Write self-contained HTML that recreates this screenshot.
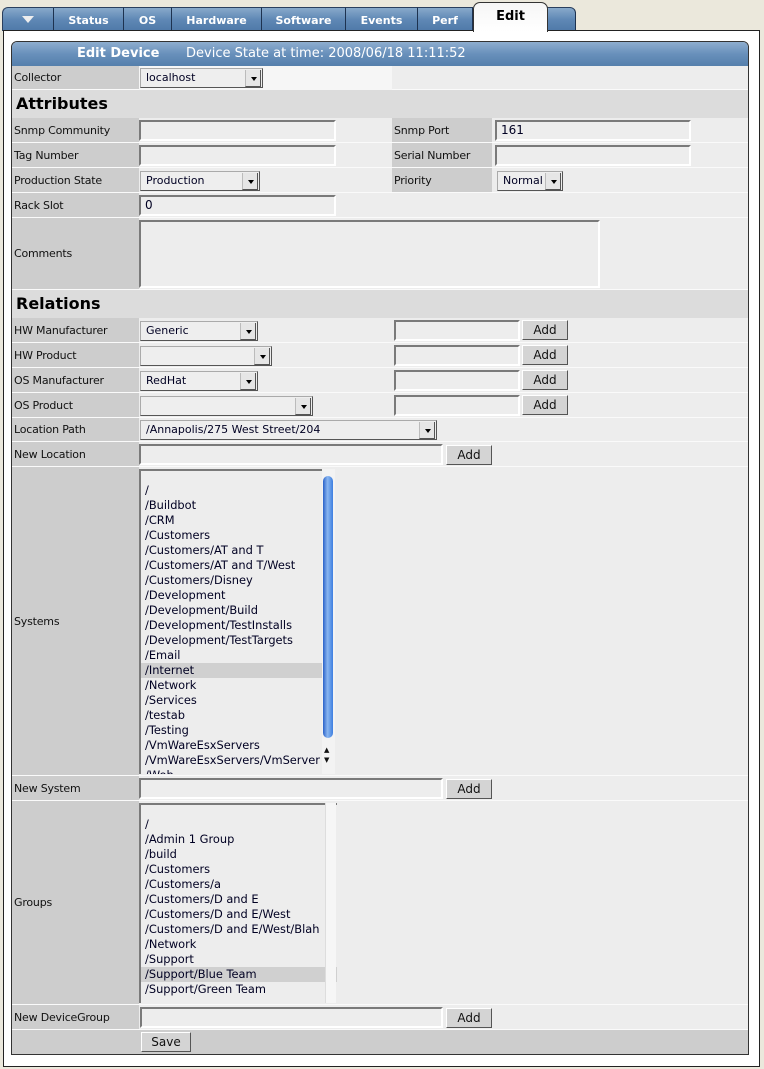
<!DOCTYPE html>
<html><head><style>
*{margin:0;padding:0;box-sizing:border-box}
body{width:764px;height:1069px;background:#ebe8dc;position:relative;overflow:hidden;font-family:"DejaVu Sans","Liberation Sans",sans-serif;font-size:11px;color:#111}
.a{position:absolute}
.tab{position:absolute;top:7px;height:24px;background:linear-gradient(#88a9cb,#5f88b5 50%,#4f79a8);color:#fff;font-weight:bold;font-size:11px;text-align:center;line-height:25px;border-right:1px solid #1d3250;border-top:1px solid #2a3f5e}
.row{position:absolute;left:12px;width:736px;background:#ededed;border-bottom:1px solid #fafafa}
.lab{position:absolute;left:0;top:0;bottom:0;width:127px;background:#cdcdcd;padding-left:2px;letter-spacing:-0.2px}
.rl{position:absolute;top:0;bottom:0;left:380px;width:100px;background:#cdcdcd;padding-left:2px;letter-spacing:-0.2px}
.inp{position:absolute;height:21px;background:#ededed;border-top:2px solid #7a7a7a;border-left:2px solid #7a7a7a;border-right:2px solid #fff;border-bottom:2px solid #fff;padding-left:4px;line-height:17px;font-size:12px;color:#002}
.sel{position:absolute;height:20px;background:#eee;border:1px solid #888;border-color:#aaa #555 #555 #aaa;padding-left:5px;line-height:18px;font-size:11px;color:#002}
.sel:after{content:"";position:absolute;right:1px;top:1px;width:14px;height:16px;background:#e6e6e6;border-left:1px solid #bbb;border-right:1px solid #555;border-bottom:1px solid #555}
.sel i{position:absolute;right:5px;top:8px;border-left:3px solid transparent;border-right:3px solid transparent;border-top:4px solid #000;z-index:2}
.btn{position:absolute;height:20px;width:46px;background:#d4d4d4;border:1px solid;border-color:#fff #555 #555 #fff;text-align:center;line-height:18px;font-size:12px;color:#111}
.h{position:absolute;left:12px;width:736px;background:#dcdcdc;font-weight:bold;font-size:16px;padding-left:4px;line-height:28px;color:#000}
.list{position:absolute;background:#ededed;border-top:2px solid #7a7a7a;border-left:2px solid #7a7a7a;font-size:11.4px;line-height:15px;color:#002;padding-top:12px;overflow:hidden;white-space:nowrap}
.list div{padding-left:4px;height:15px}
.list .s{background:#d0d0d0}
</style></head><body>
<div class="tab" style="left:2px;width:52px;border-radius:6px 0 0 0;border-left:1px solid #2a3f5e"><span style="display:inline-block;margin-top:8px;width:0;height:0;border-left:6px solid transparent;border-right:6px solid transparent;border-top:7px solid #eee;vertical-align:top"></span></div>
<div class="tab" style="left:54px;width:70px">Status</div>
<div class="tab" style="left:124px;width:48px">OS</div>
<div class="tab" style="left:172px;width:90px">Hardware</div>
<div class="tab" style="left:262px;width:84px">Software</div>
<div class="tab" style="left:346px;width:72px">Events</div>
<div class="tab" style="left:418px;width:55px">Perf</div>
<div class="tab" style="left:547px;width:29px;border-radius:0 6px 0 0"></div>
<div class="a" style="left:3px;top:30px;width:757px;height:1037px;background:#fff;border:1px solid #222"></div>
<div class="a" style="left:473px;top:2px;width:75px;height:30px;background:linear-gradient(#f6f6f6,#fff);border:1px solid #333;border-bottom:none;border-radius:7px 7px 0 0;text-align:center;font-weight:bold;font-size:13px;line-height:28px;color:#000">Edit</div>
<div class="a" style="left:11px;top:41px;width:738px;height:1014px;border:1px solid #333;background:#ededed;border-radius:6px 6px 0 0"></div>
<div class="a" style="left:12px;top:42px;width:736px;height:24px;background:linear-gradient(#8eadcf,#6890bb 50%,#557fac);border-radius:5px 5px 0 0;color:#fff;font-size:13px;line-height:24px"><b style="position:absolute;left:65px">Edit Device</b><span style="position:absolute;left:174px">Device State at time: 2008/06/18 11:11:52</span></div>

<div class="row" style="top:66px;height:24px"><div class="lab" style="line-height:24px">Collector</div><div class="a" style="left:127px;top:0;width:253px;height:24px;background:#f6f6f6"></div><div class="sel" style="left:128px;top:2px;width:123px">localhost<i></i></div></div>
<div class="h" style="top:90px;height:28px">Attributes</div>
<div class="row" style="top:118px;height:25px"><div class="lab" style="line-height:25px">Snmp Community</div><div class="inp" style="left:127px;top:2px;width:197px"></div><div class="rl" style="line-height:25px">Snmp Port</div><div class="inp" style="left:483px;top:2px;width:196px">161</div></div>
<div class="row" style="top:143px;height:25px"><div class="lab" style="line-height:25px">Tag Number</div><div class="inp" style="left:127px;top:2px;width:197px"></div><div class="rl" style="line-height:25px">Serial Number</div><div class="inp" style="left:483px;top:2px;width:196px"></div></div>
<div class="row" style="top:168px;height:25px"><div class="lab" style="line-height:25px">Production State</div><div class="sel" style="left:128px;top:3px;width:120px">Production<i></i></div><div class="rl" style="line-height:25px">Priority</div><div class="sel" style="left:485px;top:3px;width:66px">Normal<i></i></div></div>
<div class="row" style="top:193px;height:25px"><div class="lab" style="line-height:25px">Rack Slot</div><div class="inp" style="left:127px;top:2px;width:197px">0</div></div>
<div class="row" style="top:218px;height:72px"><div class="lab" style="line-height:72px">Comments</div><div class="inp" style="left:127px;top:2px;width:461px;height:68px"></div></div>
<div class="h" style="top:290px;height:28px">Relations</div>
<div class="row" style="top:318px;height:25px"><div class="lab" style="line-height:25px">HW Manufacturer</div><div class="sel" style="left:128px;top:3px;width:118px">Generic<i></i></div><div class="inp" style="left:382px;top:2px;width:126px"></div><div class="btn" style="left:510px;top:2px">Add</div></div>
<div class="row" style="top:343px;height:25px"><div class="lab" style="line-height:25px">HW Product</div><div class="sel" style="left:128px;top:3px;width:132px"><i></i></div><div class="inp" style="left:382px;top:2px;width:126px"></div><div class="btn" style="left:510px;top:2px">Add</div></div>
<div class="row" style="top:368px;height:25px"><div class="lab" style="line-height:25px">OS Manufacturer</div><div class="sel" style="left:128px;top:3px;width:118px">RedHat<i></i></div><div class="inp" style="left:382px;top:2px;width:126px"></div><div class="btn" style="left:510px;top:2px">Add</div></div>
<div class="row" style="top:393px;height:25px"><div class="lab" style="line-height:25px">OS Product</div><div class="sel" style="left:128px;top:3px;width:173px"><i></i></div><div class="inp" style="left:382px;top:2px;width:126px"></div><div class="btn" style="left:510px;top:2px">Add</div></div>
<div class="row" style="top:418px;height:24px"><div class="lab" style="line-height:24px">Location Path</div><div class="sel" style="left:128px;top:2px;width:297px">/Annapolis/275 West Street/204<i></i></div></div>
<div class="row" style="top:442px;height:25px"><div class="lab" style="line-height:25px">New Location</div><div class="inp" style="left:127px;top:2px;width:304px"></div><div class="btn" style="left:434px;top:3px">Add</div></div>
<div class="row" style="top:467px;height:309px"><div class="lab" style="line-height:309px">Systems</div>
<div class="list" style="left:127px;top:2px;width:196px;height:305px">
<div>/</div><div>/Buildbot</div><div>/CRM</div><div>/Customers</div><div>/Customers/AT and T</div><div>/Customers/AT and T/West</div><div>/Customers/Disney</div><div>/Development</div><div>/Development/Build</div><div>/Development/TestInstalls</div><div>/Development/TestTargets</div><div>/Email</div><div class="s">/Internet</div><div>/Network</div><div>/Services</div><div>/testab</div><div>/Testing</div><div>/VmWareEsxServers</div><div>/VmWareEsxServers/VmServer</div><div>/Web</div></div>
<div class="a" style="left:310px;top:2px;width:13px;height:305px;background:#f3f3f3"></div>
<div class="a" style="left:311px;top:9px;width:10px;height:262px;border-radius:5px;background:linear-gradient(90deg,#2a62c9,#8ab6f0 45%,#3d7ee0)"></div>
<div class="a" style="left:312px;top:278px;font-size:7px;line-height:10px">▲<br>▼</div>
</div>
<div class="row" style="top:776px;height:25px"><div class="lab" style="line-height:25px">New System</div><div class="inp" style="left:127px;top:2px;width:304px"></div><div class="btn" style="left:434px;top:3px">Add</div></div>
<div class="row" style="top:801px;height:204px"><div class="lab" style="line-height:204px">Groups</div>
<div class="list" style="left:127px;top:2px;width:198px;height:200px">
<div>/</div><div>/Admin 1 Group</div><div>/build</div><div>/Customers</div><div>/Customers/a</div><div>/Customers/D and E</div><div>/Customers/D and E/West</div><div>/Customers/D and E/West/Blah</div><div>/Network</div><div>/Support</div><div class="s">/Support/Blue Team</div><div>/Support/Green Team</div></div>
<div class="a" style="left:313px;top:2px;width:11px;height:200px;background:#f6f6f6;border-left:1px solid #ddd"></div>
</div>
<div class="row" style="top:1005px;height:25px"><div class="lab" style="line-height:25px">New DeviceGroup</div><div class="inp" style="left:128px;top:2px;width:303px"></div><div class="btn" style="left:434px;top:3px">Add</div></div>
<div class="row" style="top:1030px;height:24px;background:#cdcdcd;border:none"><div class="btn" style="left:129px;top:2px;width:50px">Save</div></div>
</body></html>
